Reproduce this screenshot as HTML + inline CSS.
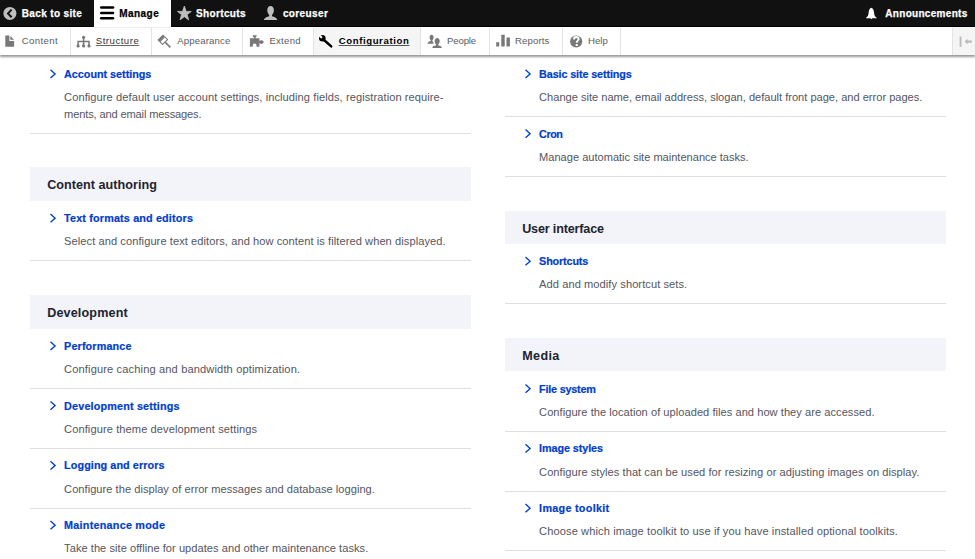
<!DOCTYPE html>
<html><head><meta charset="utf-8">
<style>
html,body{margin:0;padding:0;width:975px;height:559px;overflow:hidden;background:#fff;}
body{position:relative;font-family:"Liberation Sans",sans-serif;}
.t{position:absolute;white-space:nowrap;}
.sep{position:absolute;width:441px;height:1px;background:#dedfe4;}
.hd{position:absolute;width:441px;background:#f3f4f9;}
.bar{position:absolute;left:0;top:0;width:975px;height:26px;background:#111;border-bottom:1px solid #000;box-shadow:0 0.5px 1px rgba(0,0,0,0.3);}
.tray{position:absolute;left:0;top:27px;width:975px;height:28px;background:#fff;box-shadow:0 1.5px 2px rgba(0,0,0,0.4);}
.vs{position:absolute;top:28px;width:1px;height:27px;background:#e3e3e3;}
</style></head><body>
<div class="sep" style="left:30px;top:133.30px"></div>
<div class="hd" style="left:30px;top:167.20px;height:33.80px"></div>
<div class="sep" style="left:30px;top:260.40px"></div>
<div class="hd" style="left:30px;top:294.70px;height:34.00px"></div>
<div class="sep" style="left:30px;top:387.90px"></div>
<div class="sep" style="left:30px;top:447.70px"></div>
<div class="sep" style="left:30px;top:507.50px"></div>
<div class="sep" style="left:30px;top:567.30px"></div>
<div class="sep" style="left:505px;top:116.00px"></div>
<div class="sep" style="left:505px;top:175.90px"></div>
<div class="hd" style="left:505px;top:210.80px;height:33.20px"></div>
<div class="sep" style="left:505px;top:302.90px"></div>
<div class="hd" style="left:505px;top:337.80px;height:33.70px"></div>
<div class="sep" style="left:505px;top:430.70px"></div>
<div class="sep" style="left:505px;top:490.50px"></div>
<div class="sep" style="left:505px;top:550.30px"></div>

<div class="t" style="left:64.10px;top:63.96px;font-size:10.8px;line-height:20px;color:#003ecc;font-weight:bold;letter-spacing:-0.020px;-webkit-text-stroke:0.2px #003ecc;">Account settings</div>
<div class="t" style="left:64.10px;top:87.05px;font-size:11.1px;line-height:20px;color:#545560;font-weight:normal;letter-spacing:0.073px;">Configure default user account settings, including fields, registration require-</div>
<div class="t" style="left:64.10px;top:103.55px;font-size:11.1px;line-height:20px;color:#545560;font-weight:normal;letter-spacing:-0.148px;">ments, and email messages.</div>
<div class="t" style="left:47.20px;top:175.13px;font-size:12.6px;line-height:20px;color:#222330;font-weight:bold;letter-spacing:0.037px;">Content authoring</div>
<div class="t" style="left:64.10px;top:208.26px;font-size:10.8px;line-height:20px;color:#003ecc;font-weight:bold;letter-spacing:0.157px;-webkit-text-stroke:0.2px #003ecc;">Text formats and editors</div>
<div class="t" style="left:64.10px;top:231.35px;font-size:11.1px;line-height:20px;color:#545560;font-weight:normal;letter-spacing:0.069px;">Select and configure text editors, and how content is filtered when displayed.</div>
<div class="t" style="left:47.20px;top:302.63px;font-size:12.6px;line-height:20px;color:#222330;font-weight:bold;letter-spacing:0.140px;">Development</div>
<div class="t" style="left:64.10px;top:335.96px;font-size:10.8px;line-height:20px;color:#003ecc;font-weight:bold;letter-spacing:0.130px;-webkit-text-stroke:0.2px #003ecc;">Performance</div>
<div class="t" style="left:64.10px;top:359.05px;font-size:11.1px;line-height:20px;color:#545560;font-weight:normal;letter-spacing:0.134px;">Configure caching and bandwidth optimization.</div>
<div class="t" style="left:64.10px;top:395.66px;font-size:10.8px;line-height:20px;color:#003ecc;font-weight:bold;letter-spacing:0.168px;-webkit-text-stroke:0.2px #003ecc;">Development settings</div>
<div class="t" style="left:64.10px;top:418.75px;font-size:11.1px;line-height:20px;color:#545560;font-weight:normal;letter-spacing:0.086px;">Configure theme development settings</div>
<div class="t" style="left:64.10px;top:455.46px;font-size:10.8px;line-height:20px;color:#003ecc;font-weight:bold;letter-spacing:0.082px;-webkit-text-stroke:0.2px #003ecc;">Logging and errors</div>
<div class="t" style="left:64.10px;top:478.55px;font-size:11.1px;line-height:20px;color:#545560;font-weight:normal;letter-spacing:0.030px;">Configure the display of error messages and database logging.</div>
<div class="t" style="left:64.10px;top:515.26px;font-size:10.8px;line-height:20px;color:#003ecc;font-weight:bold;letter-spacing:0.240px;-webkit-text-stroke:0.2px #003ecc;">Maintenance mode</div>
<div class="t" style="left:64.10px;top:538.35px;font-size:11.1px;line-height:20px;color:#545560;font-weight:normal;letter-spacing:0.036px;">Take the site offline for updates and other maintenance tasks.</div>
<div class="t" style="left:539.10px;top:63.96px;font-size:10.8px;line-height:20px;color:#003ecc;font-weight:bold;letter-spacing:-0.122px;-webkit-text-stroke:0.2px #003ecc;">Basic site settings</div>
<div class="t" style="left:539.10px;top:87.05px;font-size:11.1px;line-height:20px;color:#545560;font-weight:normal;letter-spacing:-0.012px;">Change site name, email address, slogan, default front page, and error pages.</div>
<div class="t" style="left:539.10px;top:123.76px;font-size:10.8px;line-height:20px;color:#003ecc;font-weight:bold;letter-spacing:-0.467px;-webkit-text-stroke:0.2px #003ecc;">Cron</div>
<div class="t" style="left:539.10px;top:146.85px;font-size:11.1px;line-height:20px;color:#545560;font-weight:normal;letter-spacing:-0.018px;">Manage automatic site maintenance tasks.</div>
<div class="t" style="left:522.20px;top:218.73px;font-size:12.6px;line-height:20px;color:#222330;font-weight:bold;letter-spacing:-0.169px;">User interface</div>
<div class="t" style="left:539.10px;top:251.26px;font-size:10.8px;line-height:20px;color:#003ecc;font-weight:bold;letter-spacing:-0.150px;-webkit-text-stroke:0.2px #003ecc;">Shortcuts</div>
<div class="t" style="left:539.10px;top:274.35px;font-size:11.1px;line-height:20px;color:#545560;font-weight:normal;letter-spacing:0.068px;">Add and modify shortcut sets.</div>
<div class="t" style="left:522.20px;top:345.73px;font-size:12.6px;line-height:20px;color:#222330;font-weight:bold;letter-spacing:0.375px;">Media</div>
<div class="t" style="left:539.10px;top:378.76px;font-size:10.8px;line-height:20px;color:#003ecc;font-weight:bold;letter-spacing:-0.200px;-webkit-text-stroke:0.2px #003ecc;">File system</div>
<div class="t" style="left:539.10px;top:401.85px;font-size:11.1px;line-height:20px;color:#545560;font-weight:normal;letter-spacing:0.036px;">Configure the location of uploaded files and how they are accessed.</div>
<div class="t" style="left:539.10px;top:438.46px;font-size:10.8px;line-height:20px;color:#003ecc;font-weight:bold;letter-spacing:-0.082px;-webkit-text-stroke:0.2px #003ecc;">Image styles</div>
<div class="t" style="left:539.10px;top:461.55px;font-size:11.1px;line-height:20px;color:#545560;font-weight:normal;letter-spacing:0.048px;">Configure styles that can be used for resizing or adjusting images on display.</div>
<div class="t" style="left:539.10px;top:498.26px;font-size:10.8px;line-height:20px;color:#003ecc;font-weight:bold;letter-spacing:0.283px;-webkit-text-stroke:0.2px #003ecc;">Image toolkit</div>
<div class="t" style="left:539.10px;top:521.35px;font-size:11.1px;line-height:20px;color:#545560;font-weight:normal;letter-spacing:0.100px;">Choose which image toolkit to use if you have installed optional toolkits.</div>

<div class="bar"></div>
<div style="position:absolute;left:94px;top:0;width:77px;height:27px;background:#fff"></div>
<div class="tray"></div>
<div style="position:absolute;left:94px;top:27px;width:77px;height:1px;background:#ececec"></div>
<div style="position:absolute;left:313.5px;top:27px;width:107px;height:28px;background:#f5f5f5"></div>
<div style="position:absolute;left:952.6px;top:27px;width:23px;height:28px;background:#f5f5f5"></div>
<div class="vs" style="left:70px"></div>
<div class="vs" style="left:151px"></div>
<div class="vs" style="left:242px"></div>
<div class="vs" style="left:313px"></div>
<div class="vs" style="left:420px"></div>
<div class="vs" style="left:489px"></div>
<div class="vs" style="left:562px"></div>
<div class="vs" style="left:620px"></div>
<div class="vs" style="left:952px"></div>
<div class="t" style="left:21.80px;top:3.53px;font-size:10.0px;line-height:20px;color:#ffffff;font-weight:bold;letter-spacing:0.355px;-webkit-text-stroke:0.25px #fff;">Back to site</div>
<div class="t" style="left:119.20px;top:3.53px;font-size:10.0px;line-height:20px;color:#000000;font-weight:bold;letter-spacing:0.460px;-webkit-text-stroke:0.25px #000;">Manage</div>
<div class="t" style="left:196.00px;top:3.53px;font-size:10.0px;line-height:20px;color:#ffffff;font-weight:bold;letter-spacing:0.363px;-webkit-text-stroke:0.25px #fff;">Shortcuts</div>
<div class="t" style="left:282.90px;top:3.53px;font-size:10.0px;line-height:20px;color:#ffffff;font-weight:bold;letter-spacing:0.386px;-webkit-text-stroke:0.25px #fff;">coreuser</div>
<div class="t" style="left:885.30px;top:3.53px;font-size:10.0px;line-height:20px;color:#ffffff;font-weight:bold;letter-spacing:0.300px;-webkit-text-stroke:0.25px #fff;">Announcements</div>
<div class="t" style="left:21.70px;top:31.27px;font-size:9.6px;line-height:20px;color:#5c5c5c;font-weight:normal;letter-spacing:0.383px;">Content</div>
<div class="t" style="left:95.80px;top:31.27px;font-size:9.6px;line-height:20px;color:#333333;font-weight:normal;letter-spacing:0.500px;text-decoration:underline;text-decoration-color:#666;">Structure</div>
<div class="t" style="left:177.30px;top:31.27px;font-size:9.6px;line-height:20px;color:#5c5c5c;font-weight:normal;letter-spacing:0.133px;">Appearance</div>
<div class="t" style="left:269.40px;top:31.27px;font-size:9.6px;line-height:20px;color:#5c5c5c;font-weight:normal;letter-spacing:0.260px;">Extend</div>
<div class="t" style="left:338.70px;top:31.27px;font-size:9.6px;line-height:20px;color:#000000;font-weight:bold;letter-spacing:0.600px;text-decoration:underline;text-decoration-color:#555;">Configuration</div>
<div class="t" style="left:447.00px;top:31.27px;font-size:9.6px;line-height:20px;color:#5c5c5c;font-weight:normal;letter-spacing:-0.140px;">People</div>
<div class="t" style="left:515.00px;top:31.27px;font-size:9.6px;line-height:20px;color:#5c5c5c;font-weight:normal;letter-spacing:0.117px;">Reports</div>
<div class="t" style="left:588.00px;top:31.27px;font-size:9.6px;line-height:20px;color:#5c5c5c;font-weight:normal;letter-spacing:0.000px;">Help</div>

<svg style="position:absolute;left:0;top:0" width="975" height="559" viewBox="0 0 975 559">
<path d="M50.50 69.80 L55.10 73.90 L50.50 78.00" fill="none" stroke="#003ecc" stroke-width="1.35"/>
<path d="M50.50 214.10 L55.10 218.20 L50.50 222.30" fill="none" stroke="#003ecc" stroke-width="1.35"/>
<path d="M50.50 341.80 L55.10 345.90 L50.50 350.00" fill="none" stroke="#003ecc" stroke-width="1.35"/>
<path d="M50.50 401.50 L55.10 405.60 L50.50 409.70" fill="none" stroke="#003ecc" stroke-width="1.35"/>
<path d="M50.50 461.30 L55.10 465.40 L50.50 469.50" fill="none" stroke="#003ecc" stroke-width="1.35"/>
<path d="M50.50 521.10 L55.10 525.20 L50.50 529.30" fill="none" stroke="#003ecc" stroke-width="1.35"/>
<path d="M525.50 69.80 L530.10 73.90 L525.50 78.00" fill="none" stroke="#003ecc" stroke-width="1.35"/>
<path d="M525.50 129.60 L530.10 133.70 L525.50 137.80" fill="none" stroke="#003ecc" stroke-width="1.35"/>
<path d="M525.50 257.10 L530.10 261.20 L525.50 265.30" fill="none" stroke="#003ecc" stroke-width="1.35"/>
<path d="M525.50 384.60 L530.10 388.70 L525.50 392.80" fill="none" stroke="#003ecc" stroke-width="1.35"/>
<path d="M525.50 444.30 L530.10 448.40 L525.50 452.50" fill="none" stroke="#003ecc" stroke-width="1.35"/>
<path d="M525.50 504.10 L530.10 508.20 L525.50 512.30" fill="none" stroke="#003ecc" stroke-width="1.35"/>
<circle cx="9.9" cy="13.4" r="6.5" fill="#bebebe"/>
<path d="M11.6 9.6 L8 13.4 L11.6 17.2" fill="none" stroke="#111" stroke-width="2"/>
<g stroke="#000" stroke-width="2.5" stroke-linecap="round"><path d="M101.2 7.4H113"/><path d="M101.2 12.9H113"/><path d="M101.2 18.3H113"/></g>
<path d="M184.35 6 L186.2 11.4 L191.3 11.4 L187.2 14.6 L188.7 19.9 L184.35 16.7 L180 19.9 L181.5 14.6 L177.4 11.4 L182.5 11.4 Z" fill="#bebebe" stroke="#bebebe" stroke-width="0.8" stroke-linejoin="round"/>
<path d="M270.6 6 C268.5 6 267.3 7.8 267.3 10.3 C267.3 12.5 268.2 14 269.2 15 L269.2 16.2 C267 16.8 264.4 17.6 263.9 19.9 L277.3 19.9 C276.8 17.6 274.2 16.8 272 16.2 L272 15 C273 14 273.9 12.5 273.9 10.3 C273.9 7.8 272.7 6 270.6 6 Z" fill="#bebebe"/>
<path d="M871.3 7.7 C869.3 8.2 868.8 10.5 868.6 13 C868.4 15.5 867.5 16.9 866 17.8 L866 18.2 L876.7 18.2 L876.7 17.8 C875.2 16.9 874.3 15.5 874.1 13 C873.9 10.5 873.4 8.2 871.3 7.7 Z M870.3 18.2 L872.3 18.2 L871.3 19.3 Z" fill="#fff"/>
<path d="M5.3 35.4 H9.4 V40.9 H14.1 V46.7 H5.3 Z" fill="#787878"/>
<path d="M10.3 35.9 L14.1 39.8 H10.3 Z" fill="#787878"/>
<g fill="#787878"><circle cx="83.6" cy="37.3" r="1.6"/><circle cx="78.1" cy="45.9" r="1.6"/><circle cx="83.6" cy="45.9" r="1.6"/><circle cx="89" cy="45.9" r="1.6"/></g>
<path d="M83.6 37.3 V45.9 M78.1 45.9 V41.6 H89 V45.9" fill="none" stroke="#787878" stroke-width="1.5"/>
<g transform="translate(164.6 41.6) rotate(-45)">
<rect x="-3.9" y="-6.2" width="7.8" height="2.7" fill="#787878"/>
<rect x="-3.5" y="-3.2" width="7" height="3.9" fill="none" stroke="#787878" stroke-width="1"/>
<rect x="-0.8" y="0.7" width="1.6" height="7.4" fill="#787878"/>
</g>
<path d="M249.9 38.2 H254 V37.3 C253.2 37.1 252.6 36.3 252.8 35.3 L256.6 35.3 C256.8 36.3 256.2 37.1 255.5 37.3 V38.2 H259.4 V41 C259.8 40.5 260.6 40.1 261.7 40.2 C263 40.5 263.7 41.6 263.7 42 C263.7 42.6 263 43.6 261.7 43.9 C260.6 44 259.8 43.6 259.4 43.1 V46.7 H256.5 V45.6 C256.5 44.3 255.6 43.4 254.6 43.4 C253.6 43.4 252.7 44.3 252.7 45.6 V46.7 H249.9 Z" fill="#787878"/>
<g stroke="#fff" stroke-linecap="round" fill="#fff" opacity="0.9"><circle cx="322.3" cy="38.3" r="4.3" stroke="none"/><path d="M322.6 38.7 L331.2 46.4" stroke-width="4.4"/></g>
<circle cx="322.3" cy="38.3" r="3.3" fill="#000"/>
<path d="M322.6 38.7 L331.2 46.4" stroke="#000" stroke-width="2.6" stroke-linecap="round"/>
<path d="M321.3 37.3 L318.2 34.2" stroke="#f5f5f5" stroke-width="2.3" stroke-linecap="round"/>
<path d="M431.6 34.7 C430.4 34.7 429.6 35.8 429.6 37.3 C429.6 38.8 430.2 39.7 430.8 40.3 L430.8 41.1 C429.6 41.5 427.8 42 427.5 43.8 L433.5 43.8 L433.5 42.8 C433.2 42 432.8 41.6 432.4 41.3 L432.4 40.3 C433 39.7 433.6 38.8 433.6 37.3 C433.6 35.8 432.8 34.7 431.6 34.7 Z" fill="#787878"/>
<path d="M437.2 37.9 C435.7 37.9 434.7 39.2 434.7 41 C434.7 42.7 435.4 43.8 436.1 44.5 L436.1 45.3 C434.4 45.8 432.6 46.2 432.3 48 L441.9 48 C441.6 46.2 439.8 45.8 438.2 45.3 L438.2 44.5 C438.9 43.8 439.7 42.7 439.7 41 C439.7 39.2 438.7 37.9 437.2 37.9 Z" fill="#787878"/>
<g fill="#787878"><rect x="496.2" y="42.2" width="3" height="4.3"/><rect x="501.3" y="34.8" width="3.4" height="11.7" rx="0.4"/><rect x="506.5" y="37.5" width="3.4" height="9" rx="0.4"/></g>
<circle cx="576.2" cy="41.5" r="6.1" fill="#787878"/>
<path d="M573.9 39.5 C573.9 37.7 575 37 576.3 37 C577.7 37 578.6 37.9 578.6 39.1 C578.6 40.6 576.7 40.8 576.7 42.8" stroke="#fff" stroke-width="1.9" fill="none"/><rect x="575.7" y="44" width="2" height="2" fill="#fff"/>
<rect x="959.6" y="36.5" width="1.9" height="10.3" fill="#bbb"/>
<path d="M964.6 41.6 L967.6 38.8 V40.5 H971.8 V42.7 H967.6 V44.4 Z" fill="#bbb"/>

</svg>
</body></html>
